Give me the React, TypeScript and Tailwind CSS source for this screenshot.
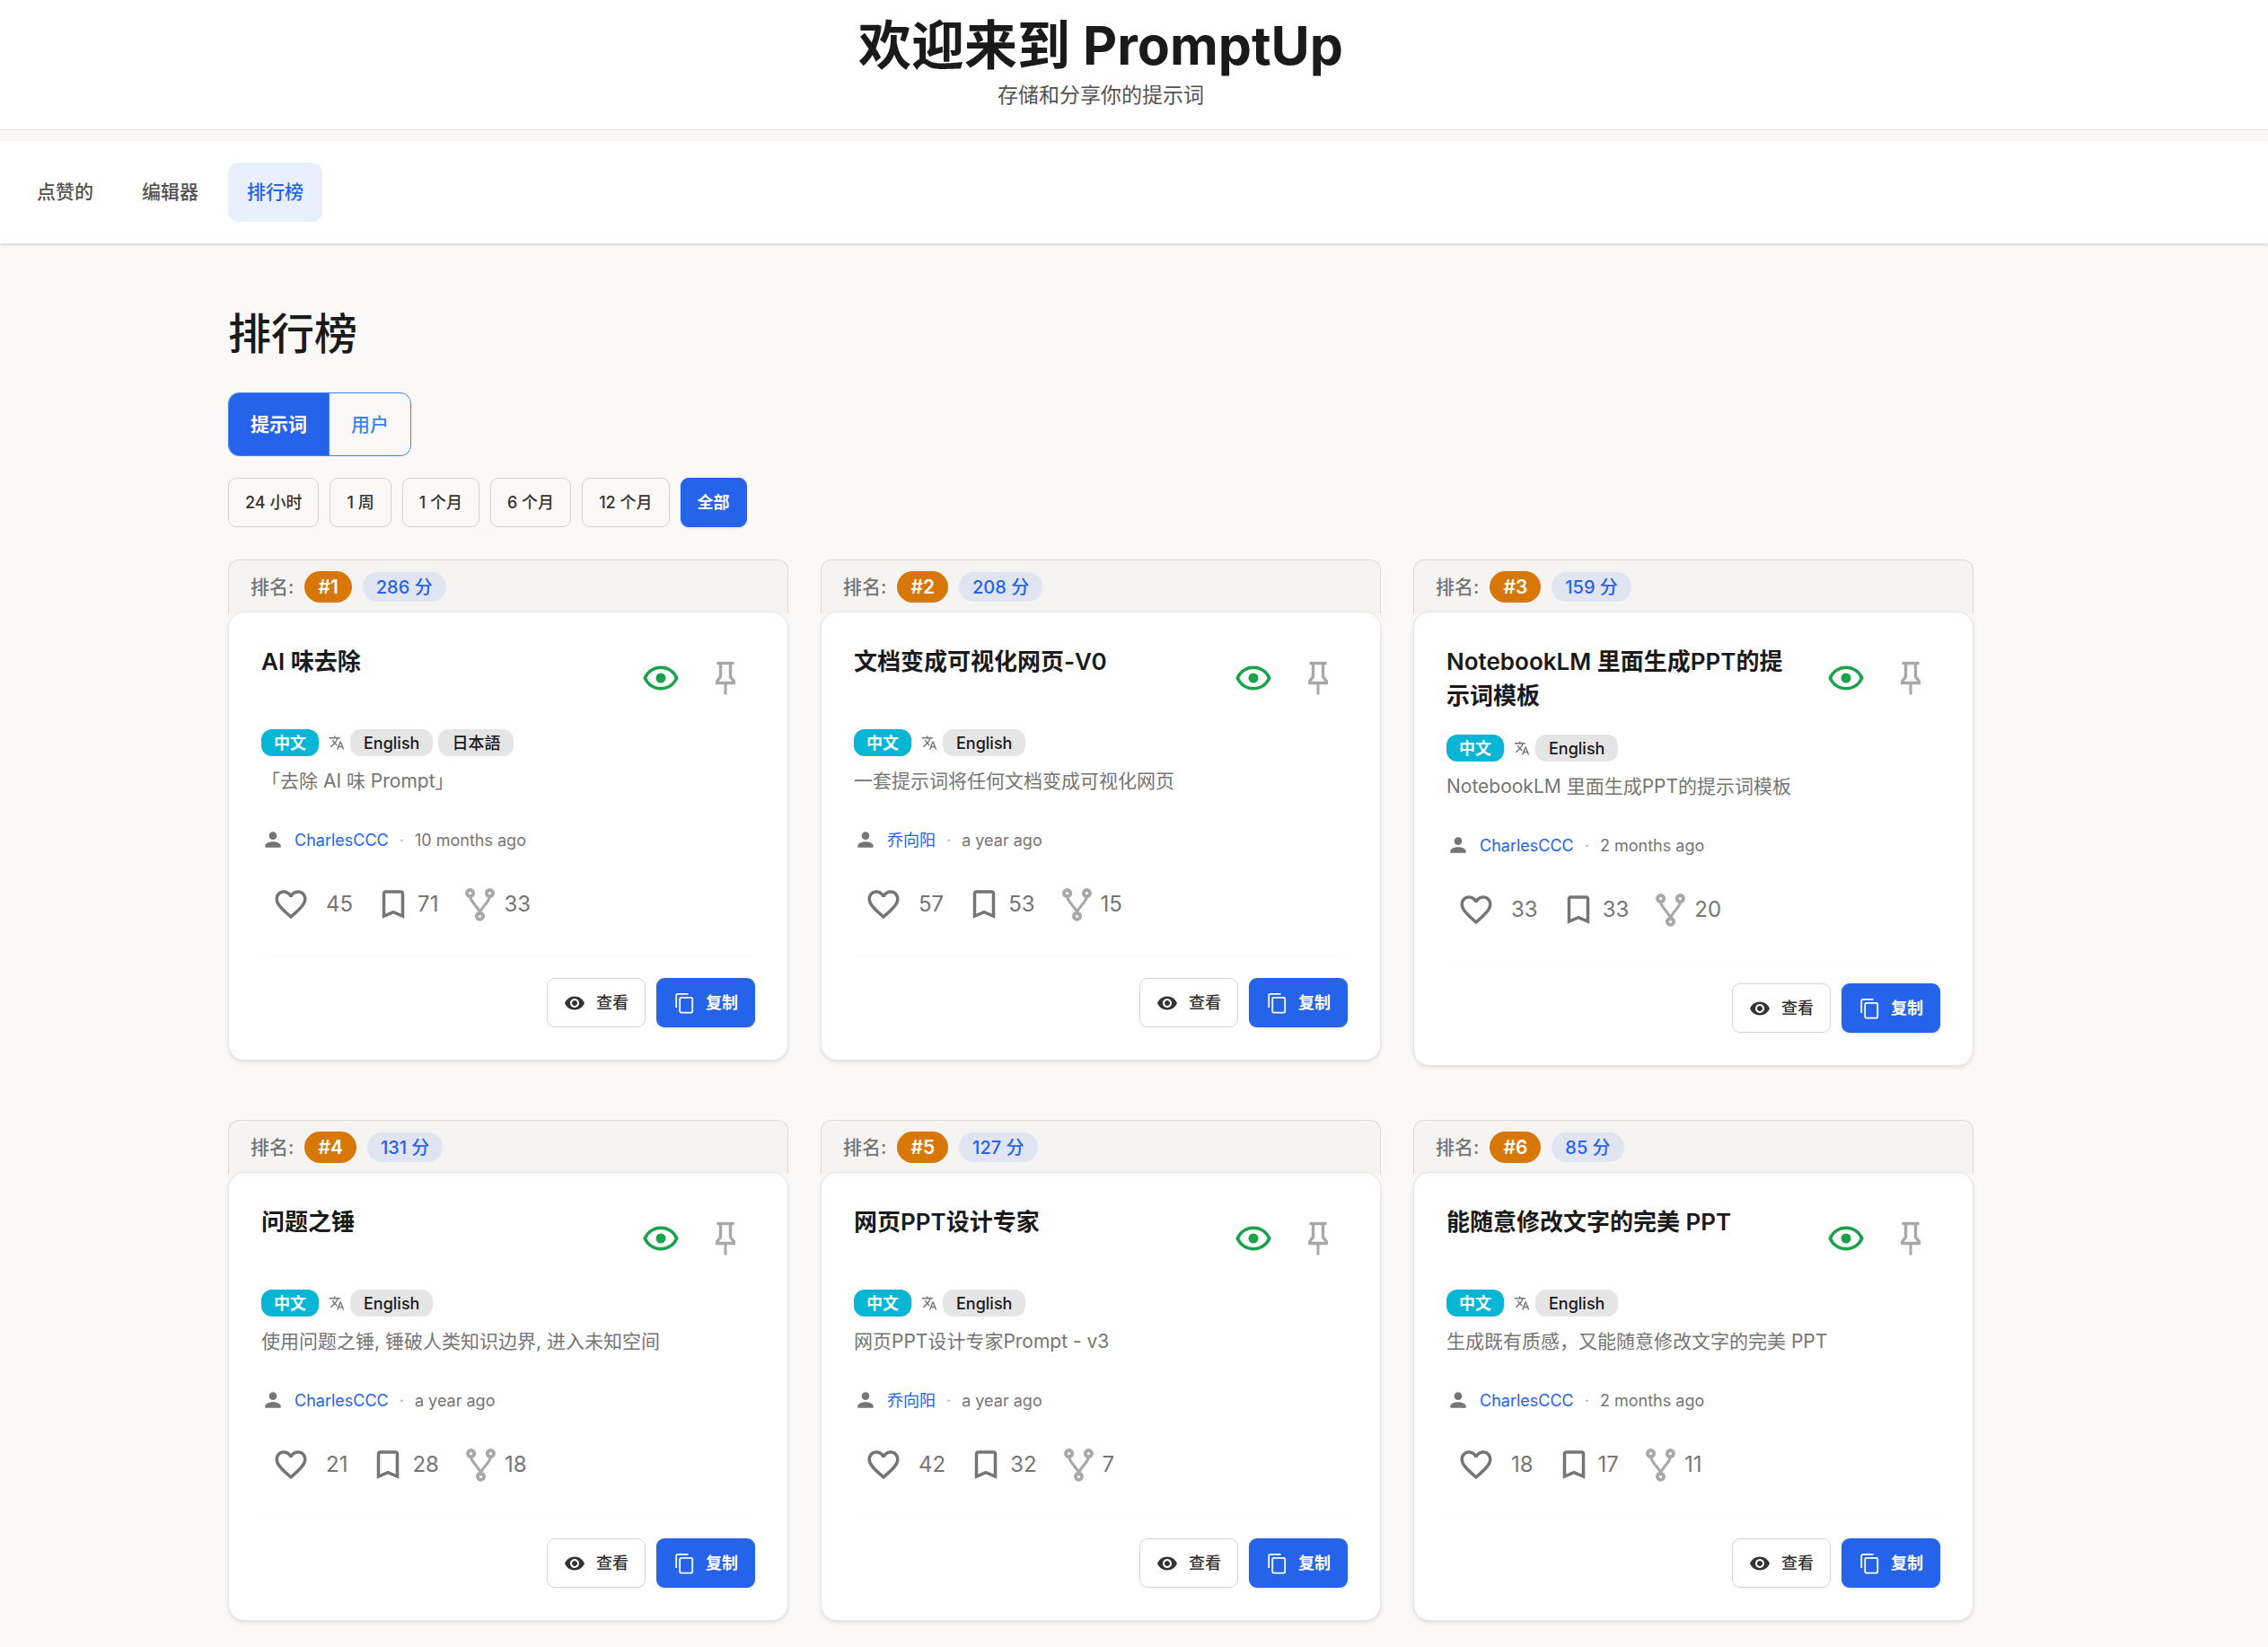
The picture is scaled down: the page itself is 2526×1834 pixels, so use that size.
import { useState } from 'react';
import {
  MdVisibility,
  MdTranslate,
  MdPerson,
  MdFavoriteBorder,
  MdBookmarkBorder,
} from 'react-icons/md';

const nav = ['点赞的', '编辑器', '排行榜'];
const periods = ['24 小时', '1 周', '1 个月', '6 个月', '12 个月', '全部'];

const prompts = [
  { title: 'AI 味去除', langs: ['English', '日本語'], desc: '「去除 AI 味 Prompt」', author: 'CharlesCCC', time: '10 months ago', score: 286, likes: 45, saves: 71, forks: 33 },
  { title: '文档变成可视化网页-V0', langs: ['English'], desc: '一套提示词将任何文档变成可视化网页', author: '乔向阳', time: 'a year ago', score: 208, likes: 57, saves: 53, forks: 15 },
  { title: 'NotebookLM 里面生成PPT的提示词模板', langs: ['English'], desc: 'NotebookLM 里面生成PPT的提示词模板', author: 'CharlesCCC', time: '2 months ago', score: 159, likes: 33, saves: 33, forks: 20 },
  { title: '问题之锤', langs: ['English'], desc: '使用问题之锤, 锤破人类知识边界, 进入未知空间', author: 'CharlesCCC', time: 'a year ago', score: 131, likes: 21, saves: 28, forks: 18 },
  { title: '网页PPT设计专家', langs: ['English'], desc: '网页PPT设计专家Prompt - v3', author: '乔向阳', time: 'a year ago', score: 127, likes: 42, saves: 32, forks: 7 },
  { title: '能随意修改文字的完美 PPT', langs: ['English'], desc: '生成既有质感，又能随意修改文字的完美 PPT', author: 'CharlesCCC', time: '2 months ago', score: 85, likes: 18, saves: 17, forks: 11 },
];

function EyeIcon() {
  return (
    <svg width="40" height="28" viewBox="0 0 40 28" fill="none" stroke="currentColor" strokeWidth="3.6">
      <path d="M2.3 14C5.5 6.7 12.2 2.3 20 2.3S34.5 6.7 37.7 14C34.5 21.3 27.8 25.7 20 25.7S5.5 21.3 2.3 14z" />
      <circle cx="20" cy="14" r="5.5" fill="currentColor" stroke="none" />
    </svg>
  );
}

function PinIcon() {
  return (
    <svg width="24" height="38" viewBox="0 0 24 38" fill="none" stroke="currentColor" strokeWidth="3.4">
      <path d="M2.5 2.5h19" />
      <path d="M6.5 3v14.500L2.700 22.500v2h18.600v-2l-3.800-5V3" />
      <path d="M12 25v12.5" strokeWidth="3" />
    </svg>
  );
}

function ForkIcon() {
  return (
    <svg width="33" height="37" viewBox="0 0 33 37" fill="none" stroke="currentColor" strokeWidth="3.8">
      <circle cx="5.6" cy="5.6" r="3.6" />
      <circle cx="27.4" cy="5.6" r="3.6" />
      <circle cx="16.5" cy="31.2" r="3.6" />
      <path d="M5.8 10c.6 5.5 8.5 11 10.7 17C18.7 21 26.6 15.5 27.2 10" strokeWidth="3" />
    </svg>
  );
}

function CopyIcon() {
  return (
    <svg width="24" height="24" viewBox="0 0 24 24" fill="none" stroke="currentColor" strokeWidth="1.8">
      <path d="M16.5 1.8H5A1.8 1.8 0 0 0 3.2 3.6V17" />
      <rect x="7.2" y="5.8" width="14" height="16.8" rx="1.6" />
    </svg>
  );
}

function PromptCard({ prompt, rank }: { prompt: (typeof prompts)[number]; rank: number }) {
  return (
    <article>
      <div className="flex h-[60px] items-center gap-3 rounded-t-xl border border-b-0 border-[#dbdbda] bg-[#f5f4f2] px-6">
        <span className="text-[21px] font-medium text-[#757575]">排名:</span>
        <span className="flex h-[35px] items-center rounded-full bg-[#d97706] px-[15px] text-[21px] font-semibold text-white">#{rank}</span>
        <span className="flex h-[33px] items-center rounded-full bg-[#e1e5f1] px-[15px] text-[20px] font-medium text-[#2563eb]">{prompt.score} 分</span>
      </div>

      <div className="-mt-0.5 rounded-[18px] border border-[#e5e5e5] bg-white p-9 shadow-[0_2px_4px_rgba(0,0,0,0.1)]">
        <div className="flex items-start justify-between gap-6">
          <h2 className="text-[26px] leading-[38px] font-semibold text-[#1a1a1a]">{prompt.title}</h2>
          <div className="flex h-[70px] shrink-0 items-center gap-1.5 pt-1">
            <button aria-label="公开" className="flex w-[66px] justify-center text-[#16a34a]">
              <EyeIcon />
            </button>
            <button aria-label="置顶" className="flex w-[66px] justify-center text-[#a8a8a8]">
              <PinIcon />
            </button>
          </div>
        </div>

        <div className="mt-6 flex h-[30px] items-center gap-1.5 text-[18px] font-medium text-[#1a1a1a]">
          <span className="flex h-[30px] items-center rounded-xl bg-[#06b6d4] px-3.5 font-semibold text-white">中文</span>
          <MdTranslate size={18} className="ml-[5px] text-[#757575]" />
          {prompt.langs.map((lang) => (
            <span key={lang} className="flex h-[30px] items-center rounded-xl bg-[#e5e5e5] px-[15px]">
              {lang}
            </span>
          ))}
        </div>

        <p className="mt-3 text-[21px] leading-[32px] text-[#757575]">{prompt.desc}</p>

        <div className="mt-[34px] flex h-[30px] items-center text-[18px] text-[#757575]">
          <MdPerson size={26} />
          <a href="#author" className="ml-[11px] text-[#2563eb]">{prompt.author}</a>
          <span className="mx-3 text-[#a8a8a8]">·</span>
          <span>{prompt.time}</span>
        </div>

        <div className="mt-9 flex h-[42px] items-center text-[24px] text-[#757575]">
          <button className="flex items-center gap-[18px] pl-3">
            <MdFavoriteBorder size={42} />
            {prompt.likes}
          </button>
          <button className="ml-6 flex items-center gap-1.5">
            <MdBookmarkBorder size={42} />
            {prompt.saves}
          </button>
          <button className="ml-[30px] flex items-center gap-2.5">
            <span className="text-[#a8a8a8]"><ForkIcon /></span>
            {prompt.forks}
          </button>
        </div>

        <div className="mt-9 flex justify-end gap-3 border-t border-[#fcfcfc] pt-6 text-[18px]">
          <button className="flex h-[55px] items-center gap-3 rounded-[9px] border border-[#d4d4d4] px-[18px] font-medium text-[#333]">
            <MdVisibility size={24} />
            查看
          </button>
          <button className="flex h-[55px] items-center gap-3 rounded-[9px] bg-[#2563eb] px-[19px] font-semibold text-white shadow-sm">
            <CopyIcon />
            复制
          </button>
        </div>
      </div>
    </article>
  );
}

export default function App() {
  const [period, setPeriod] = useState('全部');
  const [tab, setTab] = useState('提示词');

  return (
    <div className="min-h-screen bg-[#faf9f7] font-['Inter','Noto_Sans_CJK_SC',sans-serif] text-[#1a1a1a]">
      <header className="border-b border-[#e5e5e5] bg-white pt-3 pr-[74px] pb-5 text-center">
        <h1 className="text-[59px] leading-[77px] font-bold">欢迎来到 PromptUp</h1>
        <p className="text-[23px] leading-[35px] text-[#525252]">存储和分享你的提示词</p>
      </header>

      <nav className="mt-3 flex gap-3 border-b border-[#e5e5e5] bg-white py-6 pl-5 shadow-sm">
        {nav.map((item) => (
          <a
            key={item}
            href="#nav"
            className={`flex h-[66px] items-center rounded-xl px-[21px] text-[21px] font-medium ${
              item === '排行榜' ? 'bg-[#e9effd] text-[#2563eb]' : 'text-[#525252]'
            }`}
          >
            {item}
          </a>
        ))}
      </nav>

      <main className="pt-[67px] pr-[74px] pb-6">
        <div className="mx-auto max-w-[1944px]">
          <h2 className="text-[48px] leading-[66px] font-medium">排行榜</h2>

          <div className="mt-8 flex h-[71px] w-fit overflow-hidden rounded-xl border border-[#3b82f6]">
            {['提示词', '用户'].map((item) => (
              <button
                key={item}
                onClick={() => setTab(item)}
                className={`border-[#3b82f6] px-6 text-[21px] not-first:border-l ${
                  tab === item ? 'bg-[#2563eb] font-semibold text-white' : 'font-medium text-[#3b82f6]'
                }`}
              >
                {item}
              </button>
            ))}
          </div>

          <div className="mt-6 flex flex-wrap gap-3">
            {periods.map((item) => (
              <button
                key={item}
                onClick={() => setPeriod(item)}
                className={`h-[55px] rounded-[9px] border px-[18px] text-[18px] ${
                  period === item
                    ? 'border-[#2563eb] bg-[#2563eb] font-semibold text-white shadow-sm'
                    : 'border-[#d4d4d4] font-medium text-[#333]'
                }`}
              >
                {item}
              </button>
            ))}
          </div>

          <div className="mt-9 grid grid-cols-3 items-start gap-x-9 gap-y-[60px]">
            {prompts.map((prompt, i) => (
              <PromptCard key={prompt.title} prompt={prompt} rank={i + 1} />
            ))}
          </div>
        </div>
      </main>
    </div>
  );
}
